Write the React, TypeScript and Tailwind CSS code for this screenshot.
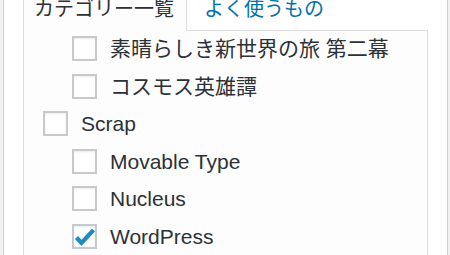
import React from "react";

const font = { fontFamily: '"Liberation Sans", "Noto Sans CJK JP", sans-serif' };

function Box({ checked }: { checked?: boolean }) {
  return (
    <span className="relative flex w-[25px] h-[25px] shrink-0 border-2 border-[#c6cacd] bg-white shadow-[inset_0_1px_2px_rgba(0,0,0,0.08)]">
      {checked && (
        <svg className="absolute left-[-2px] top-[-2px]" width="25" height="25" viewBox="0 0 25 25">
          <path d="M4.5 13.5 L9.5 19 L21.5 6" fill="none" stroke="#1e8cbe" strokeWidth="4.2" />
        </svg>
      )}
    </span>
  );
}

function Row({ label, nested, checked }: { label: string; nested?: boolean; checked?: boolean }) {
  return (
    <div className={`flex items-center h-[25px] gap-[13px] ${nested ? "pl-[48px]" : "pl-[19px]"}`}>
      <Box checked={checked} />
      <span className="text-[21px] leading-none text-[#2c3136] whitespace-nowrap">{label}</span>
    </div>
  );
}

export default function App() {
  return (
    <div className="w-[450px] h-[255px] overflow-hidden bg-[#f1f1f1] pl-[3px] pr-[2px]" style={font}>
      <div className="h-full bg-white border-x border-[#ccd0d4] px-[19px]">
        <div className="flex h-[30px] items-stretch">
          <div className="relative z-10 -mt-[10px] h-[41px] w-[164px] border-x border-t border-[#dddddd] bg-[#fdfdfd] pl-[10px] pt-[6px] text-[20px] leading-[24px] text-[#2c3136] whitespace-nowrap">
            カテゴリー一覧
          </div>
          <div className="-mt-[10px] pl-[17px] pt-[7px] text-[20px] leading-[24px] text-[#0073aa] whitespace-nowrap">
            よく使うもの
          </div>
        </div>
        <div className="h-[240px] border border-[#dddddd] bg-[#fdfdfd] pt-[5px] flex flex-col gap-[12.5px]">
          <Row nested label="素晴らしき新世界の旅 第二幕" />
          <Row nested label="コスモス英雄譚" />
          <Row label="Scrap" />
          <Row nested label="Movable Type" />
          <Row nested label="Nucleus" />
          <Row nested checked label="WordPress" />
        </div>
      </div>
    </div>
  );
}
